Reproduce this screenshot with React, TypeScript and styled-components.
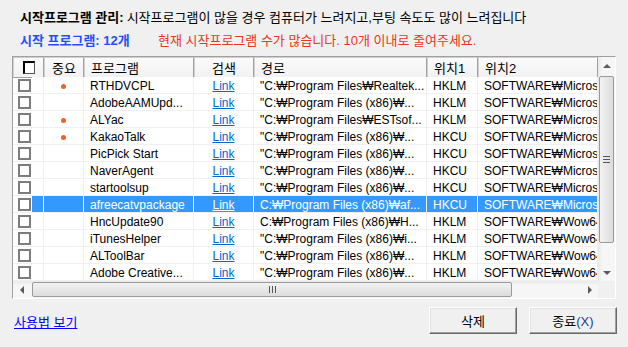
import styled, { createGlobalStyle } from "styled-components";

const COLS = "31px 40px 110px 60px 173px 51px 120px";

type TRow = {
  name: string;
  important?: boolean;
  path: string;
  hive: string;
  key: string;
};

const rows: TRow[] = [
  { name: "RTHDVCPL", important: true, path: "\"C:₩Program Files₩Realtek...", hive: "HKLM", key: "SOFTWARE₩Microso" },
  { name: "AdobeAAMUpd...", path: "\"C:₩Program Files (x86)₩...", hive: "HKLM", key: "SOFTWARE₩Microso" },
  { name: "ALYac", important: true, path: "\"C:₩Program Files₩ESTsof...", hive: "HKLM", key: "SOFTWARE₩Microso" },
  { name: "KakaoTalk", important: true, path: "\"C:₩Program Files (x86)₩...", hive: "HKCU", key: "SOFTWARE₩Microso" },
  { name: "PicPick Start", path: "\"C:₩Program Files (x86)₩...", hive: "HKCU", key: "SOFTWARE₩Microso" },
  { name: "NaverAgent", path: "\"C:₩Program Files (x86)₩...", hive: "HKCU", key: "SOFTWARE₩Microso" },
  { name: "startoolsup", path: "\"C:₩Program Files (x86)₩...", hive: "HKCU", key: "SOFTWARE₩Microso" },
  { name: "afreecatvpackage", path: "C:₩Program Files (x86)₩af...", hive: "HKCU", key: "SOFTWARE₩Microso" },
  { name: "HncUpdate90", path: "C:₩Program Files (x86)₩H...", hive: "HKLM", key: "SOFTWARE₩Wow64" },
  { name: "iTunesHelper", path: "\"C:₩Program Files (x86)₩i...", hive: "HKLM", key: "SOFTWARE₩Wow64" },
  { name: "ALToolBar", path: "\"C:₩Program Files (x86)₩...", hive: "HKLM", key: "SOFTWARE₩Wow64" },
  { name: "Adobe Creative...", path: "\"C:₩Program Files (x86)₩...", hive: "HKLM", key: "SOFTWARE₩Wow64" },
];

const SELECTED = 7;

const App = () => {
  return (
    <Page>
      <GlobalStyle />

      <Intro>
        <Line>
          <b>시작프로그램 관리:</b>시작프로그램이 많을 경우 컴퓨터가 느려지고,부팅 속도도 많이 느려집니다
        </Line>
        <Line>
          <Count>시작 프로그램: 12개</Count>
          <Warning>현재 시작프로그램 수가 많습니다. 10개 이내로 줄여주세요.</Warning>
        </Line>
      </Intro>

      <ListView>
        <Table>
          <Header>
            <HeadCell $align="center">
              <HeadCheck />
            </HeadCell>
            <HeadCell $align="center">중요</HeadCell>
            <HeadCell>프로그램</HeadCell>
            <HeadCell $align="center">검색</HeadCell>
            <HeadCell>경로</HeadCell>
            <HeadCell>위치1</HeadCell>
            <HeadCell>위치2</HeadCell>
          </Header>

          {rows.map((row, i) => {
            const sel = i === SELECTED;
            return (
              <Row key={row.name}>
                <CheckCell>
                  <Check />
                  <CheckFill $sel={sel} />
                </CheckCell>
                <Cell $sel={sel} $align="center">
                  {row.important && <Dot />}
                </Cell>
                <Cell $sel={sel}>{row.name}</Cell>
                <Cell $sel={sel} $align="center">
                  <Link $sel={sel}>Link</Link>
                </Cell>
                <Cell $sel={sel}>{row.path}</Cell>
                <Cell $sel={sel}>{row.hive}</Cell>
                <Cell $sel={sel} $last>
                  {row.key}
                </Cell>
              </Row>
            );
          })}
        </Table>

        <VScroll>
          <ArrowButton>
            <Arrow $dir="up" />
          </ArrowButton>
          <VThumb>
            <Grip $vertical />
          </VThumb>
          <ArrowButton>
            <Arrow $dir="down" />
          </ArrowButton>
        </VScroll>

        <HScroll>
          <ArrowButton>
            <Arrow $dir="left" />
          </ArrowButton>
          <HThumb>
            <Grip />
          </HThumb>
          <ArrowButton>
            <Arrow $dir="right" />
          </ArrowButton>
        </HScroll>

        <Corner />
      </ListView>

      <Footer>
        <HelpLink>사용법 보기</HelpLink>
        <Buttons>
          <Button>삭제</Button>
          <Button>
            종료<Mnemonic>(X)</Mnemonic>
          </Button>
        </Buttons>
      </Footer>
    </Page>
  );
};

const GlobalStyle = createGlobalStyle`
  body {
    margin: 0;
    background: #f0f0f0;
    font-family: "Liberation Sans", "Noto Sans CJK KR", sans-serif;
    font-size: 12px;
    color: #000;
  }
`;

const Page = styled.div`
  width: 628px;
  height: 347px;
  box-sizing: border-box;
  padding: 9px 11px 0 12px;
  background: #f0f0f0;
`;

const Intro = styled.div`
  display: flex;
  flex-direction: column;
  gap: 5px;
  padding-left: 8px;
  margin-bottom: 6px;
  font-size: 13px;
`;

const Line = styled.div`
  display: flex;
  height: 18px;
  line-height: 18px;
  white-space: nowrap;

  b {
    font-weight: bold;
    margin-right: 3px;
  }
`;

const Count = styled.span`
  width: 138px;
  font-weight: bold;
  color: #1f4fff;
`;

const Warning = styled.span`
  color: #ee3322;
`;

const ListView = styled.div`
  display: grid;
  grid-template-columns: 585px 17px;
  grid-template-rows: 224px 17px;
  width: 604px;
  box-sizing: border-box;
  border: 1px solid;
  border-color: #a0a0a0 #fff #fff #a0a0a0;
  background: #fff;
`;

const Table = styled.div`
  display: flex;
  flex-direction: column;
  overflow: hidden;
`;

const Header = styled.div`
  display: grid;
  grid-template-columns: ${COLS};
  height: 20px;
`;

type TAlign = {
  $align?: "left" | "center";
};

const HeadCell = styled.div<TAlign>`
  display: flex;
  align-items: center;
  justify-content: ${({ $align }) => ($align === "center" ? "center" : "flex-start")};
  box-sizing: border-box;
  padding: 0 6px;
  font-size: 13px;
  background: linear-gradient(#fbfbfb, #f1f1f1);
  border-top: 1px solid #d0d0d0;
  border-left: 1px solid #d0d0d0;
  border-right: 1px solid #a0a0a0;
  border-bottom: 1px solid #a0a0a0;
  white-space: nowrap;
`;

const HeadCheck = styled.div`
  width: 12px;
  height: 13px;
  box-sizing: border-box;
  background: #fff;
  border: 1px solid #555;
  border-top: 2px solid #000;
  border-left: 2px solid #000;
`;

const Row = styled.div`
  display: grid;
  grid-template-columns: ${COLS};
  height: 17px;
`;

type TSel = {
  $sel?: boolean;
};

type TCell = TSel &
  TAlign & {
    $last?: boolean;
  };

const Cell = styled.div<TCell>`
  display: flex;
  align-items: center;
  justify-content: ${({ $align }) => ($align === "center" ? "center" : "flex-start")};
  box-sizing: border-box;
  padding: 2px ${({ $last }) => ($last ? "0" : "6px")} 0 6px;
  overflow: hidden;
  white-space: nowrap;
  border-right: 1px solid #f0f0f0;
  border-bottom: 1px solid #f0f0f0;
  background: ${({ $sel }) => ($sel ? "#3399ff" : "#fff")};
  color: ${({ $sel }) => ($sel ? "#fff" : "#000")};
`;

const CheckCell = styled.div`
  display: flex;
  align-items: center;
  box-sizing: border-box;
  padding-left: 5px;
  border-right: 1px solid #f0f0f0;
  border-bottom: 1px solid #f0f0f0;
`;

const Check = styled.div`
  width: 13px;
  height: 13px;
  box-sizing: border-box;
  border: 2px solid #7d7d7d;
  background: #fff;
`;

const CheckFill = styled.div<TSel>`
  align-self: stretch;
  flex: 1;
  margin-left: 1px;
  background: ${({ $sel }) => ($sel ? "#3399ff" : "#fff")};
`;

const Dot = styled.span`
  width: 5px;
  height: 5px;
  border-radius: 50%;
  background: #f0602a;
`;

const Link = styled.span<TSel>`
  color: ${({ $sel }) => ($sel ? "#fff" : "#0066cc")};
  text-decoration: underline;
`;

const VScroll = styled.div`
  display: flex;
  flex-direction: column;
  justify-content: space-between;
  background: linear-gradient(90deg, #e8e8e8, #f6f6f6 25%, #f6f6f6);
`;

const HScroll = styled.div`
  display: flex;
  align-items: stretch;
  background: linear-gradient(#e8e8e8, #f6f6f6 25%, #f6f6f6);
`;

const ArrowButton = styled.div`
  display: flex;
  align-items: center;
  justify-content: center;
  width: 17px;
  height: 17px;
  flex-shrink: 0;
`;

type TArrow = {
  $dir: "up" | "down" | "left" | "right";
};

const Arrow = styled.div<TArrow>`
  width: 0;
  height: 0;
  border: 4px solid transparent;
  ${({ $dir }) =>
    $dir === "up"
      ? "border-bottom-color: #5a5a5a; border-top-width: 0;"
      : $dir === "down"
      ? "border-top-color: #5a5a5a; border-bottom-width: 0;"
      : $dir === "left"
      ? "border-right-color: #5a5a5a; border-left-width: 0;"
      : "border-left-color: #5a5a5a; border-right-width: 0;"}
`;

const VThumb = styled.div`
  display: flex;
  align-items: center;
  justify-content: center;
  height: 167px;
  margin: 2px 1px auto;
  box-sizing: border-box;
  border: 1px solid #9b9b9b;
  border-radius: 2px;
  background: linear-gradient(90deg, #f2f2f2, #dcdcdc);
`;

const HThumb = styled.div`
  display: flex;
  align-items: center;
  justify-content: center;
  width: 480px;
  margin: 1px auto 1px 2px;
  box-sizing: border-box;
  border: 1px solid #9b9b9b;
  border-radius: 2px;
  background: linear-gradient(#f2f2f2, #dcdcdc);
`;

type TGrip = {
  $vertical?: boolean;
};

const Grip = styled.div<TGrip>`
  width: 7px;
  height: 7px;
  background: ${({ $vertical }) =>
    $vertical
      ? "repeating-linear-gradient(#555 0 1px, transparent 1px 3px)"
      : "repeating-linear-gradient(90deg, #555 0 1px, transparent 1px 3px)"};
`;

const Corner = styled.div`
  background: #f0f0f0;
`;

const Footer = styled.div`
  display: flex;
  align-items: center;
  justify-content: space-between;
  margin-top: 8px;
  height: 27px;
  font-size: 13px;
`;

const HelpLink = styled.a`
  margin: 2px 0 0 2px;
  color: #0000ff;
  text-decoration: underline;
  cursor: pointer;
`;

const Buttons = styled.div`
  display: flex;
  gap: 12px;
`;

const Button = styled.button`
  width: 88px;
  height: 27px;
  box-sizing: border-box;
  padding: 0;
  font: inherit;
  color: #000;
  background: #f0f0f0;
  border: 1px solid;
  border-color: #fff #696969 #696969 #fff;
  box-shadow: inset -1px -1px #a0a0a0, inset 1px 1px #e3e3e3;
`;

const Mnemonic = styled.span`
  color: #1c3f8f;
`;

export default App;
